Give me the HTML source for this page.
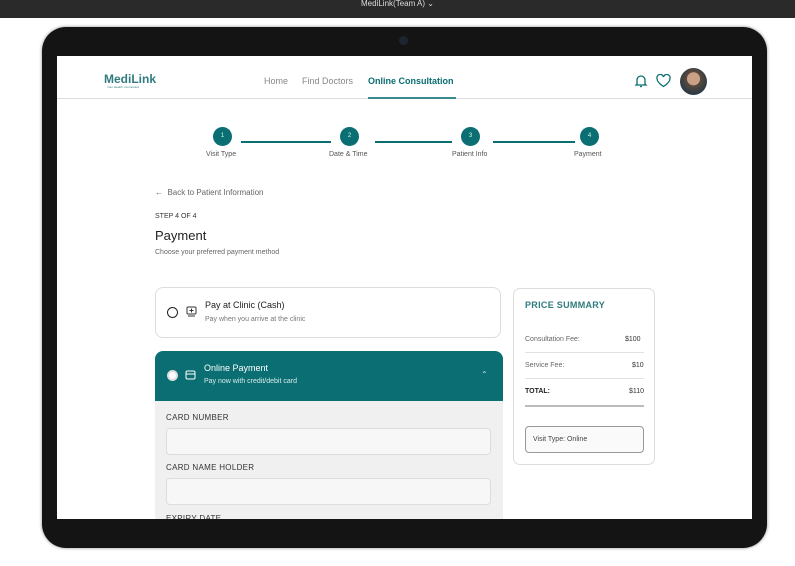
<!DOCTYPE html>
<html><head><style>
*{margin:0;padding:0;box-sizing:border-box}
body{width:795px;height:566px;background:#fff;font-family:"Liberation Sans",sans-serif;position:relative;overflow:hidden;color:#222}
.a{position:absolute}
.topbar{left:0;top:0;width:795px;height:18px;background:#2a2a2a;color:#ddd;font-size:8px;text-align:center}
.frame{left:42px;top:27px;width:725px;height:521px;background:#141414;border-radius:24px;box-shadow:0 0 3px #888}
.screen{left:57px;top:56px;width:695px;height:463px;background:#fff;overflow:hidden}
.t{font-size:7px;color:#555;white-space:nowrap}
.circ{width:19px;height:19px;border-radius:50%;background:#0b6e72;color:#cfe;font-size:6px;text-align:center;line-height:19px}
.line{height:2px;background:#0b6e72}
.lbl{font-size:8px;color:#333;letter-spacing:.3px}
.inp{background:#f7f7f7;border:1px solid #ddd;border-radius:4px;height:27px}
</style></head><body>
<div class="a topbar"><div style="padding-top:0px;line-height:7px">MediLink(Team A) &#8964;</div></div>
<div class="a frame"></div>
<div class="a" style="left:399px;top:36px;width:9px;height:9px;border-radius:50%;background:#1c2530"></div>
<div class="a screen">
  <div class="a" style="left:0;top:0;width:695px;height:43px;border-bottom:1px solid #ddd"></div>
  <div class="a" style="left:47px;top:16px;font-size:12px;font-weight:bold;color:#2f7b7e">MediLink</div>
  <div class="a" style="left:50px;top:29px;font-size:3px;color:#2f7b7e">Your Health, Connected</div>
  <div class="a" style="left:207px;top:20px;font-size:9px;color:#888">Home</div>
  <div class="a" style="left:245px;top:20px;font-size:9px;color:#888">Find Doctors</div>
  <div class="a" style="left:311px;top:20px;font-size:9px;color:#0b6e72;font-weight:bold">Online Consultation</div>
  <div class="a" style="left:311px;top:41px;width:88px;height:2px;background:#3a8a8d"></div>
  <svg class="a" style="left:576px;top:17px" width="16" height="16" viewBox="0 0 16 16" fill="none" stroke="#0b6e72" stroke-width="1.3"><path d="M4 11V7a4 4 0 0 1 8 0v4l1 1H3z"/><path d="M7 13.5h2"/></svg>
  <svg class="a" style="left:599px;top:18px" width="15" height="14" viewBox="0 0 15 14" fill="none" stroke="#0b6e72" stroke-width="1.3"><path d="M7.5 12.5C2 9 1 6.5 1 4.5A3 3 0 0 1 7.5 3a3 3 0 0 1 6.5 1.5c0 2-1 4.5-6.5 8z"/></svg>
  <div class="a" style="left:623px;top:12px;width:27px;height:27px;border-radius:50%;background:radial-gradient(circle at 50% 40%,#c9a184 0 30%,#5a4a3e 32%,#2d3a44 70%)"></div>

  <div class="a line" style="left:184px;top:85px;width:90px"></div>
  <div class="a line" style="left:318px;top:85px;width:77px"></div>
  <div class="a line" style="left:436px;top:85px;width:82px"></div>
  <div class="a circ" style="left:156px;top:71px">1</div>
  <div class="a circ" style="left:283px;top:71px">2</div>
  <div class="a circ" style="left:404px;top:71px">3</div>
  <div class="a circ" style="left:523px;top:71px">4</div>
  <div class="a t" style="left:149px;top:95px">Visit Type</div>
  <div class="a t" style="left:272px;top:95px">Date &amp; Time</div>
  <div class="a t" style="left:395px;top:95px">Patient Info</div>
  <div class="a t" style="left:517px;top:95px">Payment</div>

  <div class="a t" style="left:98px;top:132px;font-size:8px;color:#666">&#8592;&nbsp; Back to Patient Information</div>
  <div class="a t" style="left:98px;top:157px;font-size:7px;color:#333">STEP 4 OF 4</div>
  <div class="a" style="left:98px;top:172px;font-size:13px;color:#222">Payment</div>
  <div class="a t" style="left:98px;top:193px;font-size:7px;color:#666">Choose your preferred payment method</div>

  <div class="a" style="left:98px;top:231px;width:346px;height:51px;border:1px solid #ddd;border-radius:8px"></div>
  <div class="a" style="left:110px;top:251px;width:11px;height:11px;border-radius:50%;border:1.3px solid #222"></div>
  <svg class="a" style="left:129px;top:250px" width="11" height="12" viewBox="0 0 11 12" fill="none" stroke="#333" stroke-width="1"><rect x="1" y="1" width="9" height="7" rx="1"/><path d="M5.5 2.5v4M3.5 4.5h4M2 10h7"/></svg>
  <div class="a" style="left:148px;top:244px;font-size:9px;color:#222">Pay at Clinic (Cash)</div>
  <div class="a t" style="left:148px;top:260px;font-size:7px;color:#777">Pay when you arrive at the clinic</div>

  <div class="a" style="left:98px;top:295px;width:348px;height:50px;background:#0b6e72;border-radius:8px 8px 0 0"></div>
  <div class="a" style="left:110px;top:314px;width:11px;height:11px;border-radius:50%;background:#fff;border:2px solid #ddd"></div>
  <svg class="a" style="left:128px;top:314px" width="11" height="10" viewBox="0 0 11 10" fill="none" stroke="#fff" stroke-width="1"><rect x="1" y="1" width="9" height="8" rx="1.5"/><path d="M1 4h9"/></svg>
  <div class="a" style="left:147px;top:307px;font-size:9px;color:#fff">Online Payment</div>
  <div class="a t" style="left:147px;top:322px;font-size:7px;color:#d8ecec">Pay now with credit/debit card</div>
  <div class="a" style="left:424px;top:314px;font-size:8px;color:#cde">&#8963;</div>
  <div class="a" style="left:98px;top:345px;width:348px;height:130px;background:#f0f0f0"></div>
  <div class="a lbl" style="left:109px;top:357px">CARD NUMBER</div>
  <div class="a inp" style="left:109px;top:372px;width:325px"></div>
  <div class="a lbl" style="left:109px;top:407px">CARD NAME HOLDER</div>
  <div class="a inp" style="left:109px;top:422px;width:325px"></div>
  <div class="a lbl" style="left:109px;top:458px">EXPIRY DATE</div>

  <div class="a" style="left:456px;top:232px;width:142px;height:177px;border:1px solid #ddd;border-radius:7px"></div>
  <div class="a" style="left:468px;top:244px;font-size:9px;color:#2f7b7e;font-weight:bold;letter-spacing:.3px">PRICE SUMMARY</div>
  <div class="a t" style="left:468px;top:280px;font-size:7px;color:#666">Consultation Fee:</div>
  <div class="a t" style="left:568px;top:280px;font-size:7px;color:#333">$100</div>
  <div class="a" style="left:468px;top:296px;width:119px;height:1px;background:#e2e2e2"></div>
  <div class="a t" style="left:468px;top:306px;font-size:7px;color:#666">Service Fee:</div>
  <div class="a t" style="left:575px;top:306px;font-size:7px;color:#333">$10</div>
  <div class="a" style="left:468px;top:322px;width:119px;height:1px;background:#e2e2e2"></div>
  <div class="a t" style="left:468px;top:332px;font-size:7px;color:#222;font-weight:bold">TOTAL:</div>
  <div class="a t" style="left:572px;top:332px;font-size:7px;color:#333">$110</div>
  <div class="a" style="left:468px;top:349px;width:119px;height:2px;background:#bbb"></div>
  <div class="a" style="left:468px;top:370px;width:119px;height:27px;border:1px solid #999;border-radius:4px;background:#fafafa"></div>
  <div class="a t" style="left:476px;top:380px;font-size:7px;color:#444">Visit Type: Online</div>
</div>
</body></html>
